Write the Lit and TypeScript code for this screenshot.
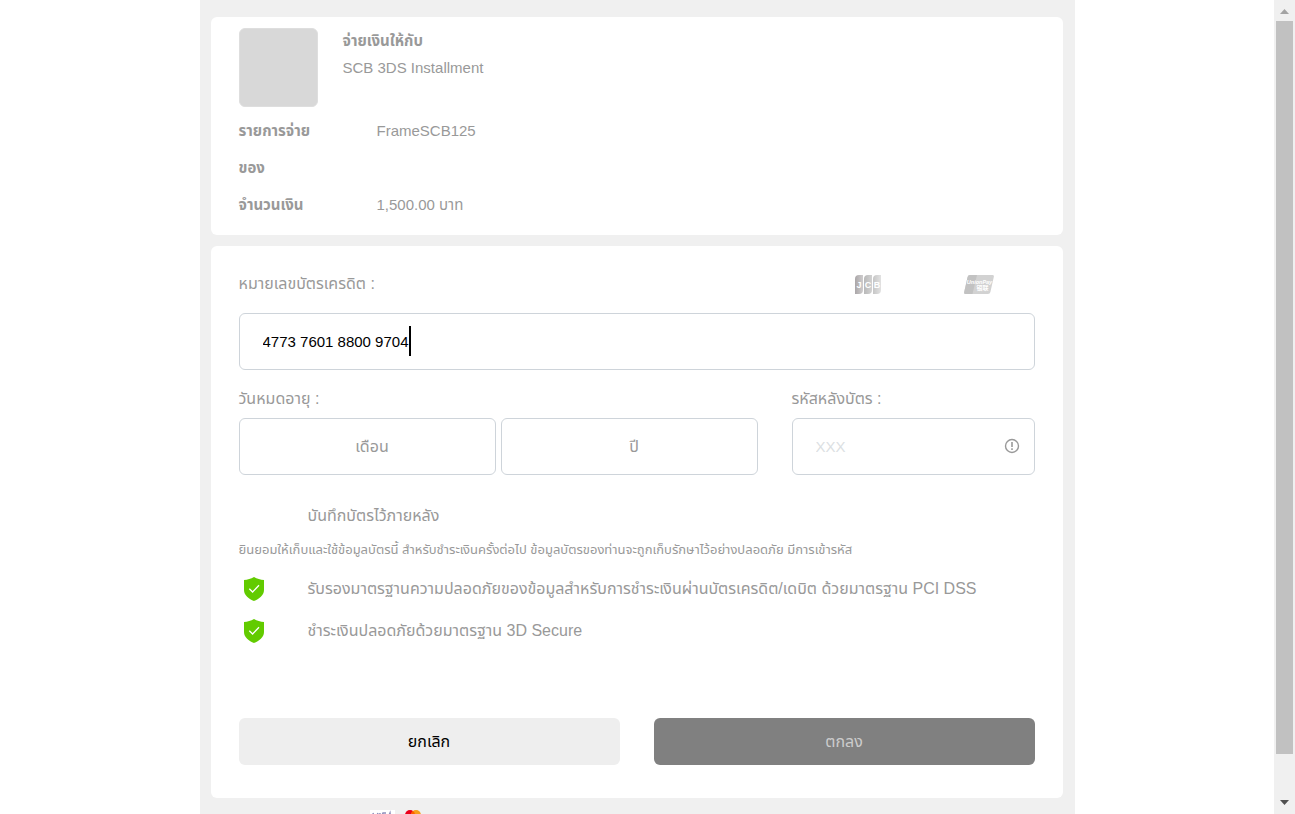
import { LitElement, html, css, svg } from "lit";
import { customElement, property } from "lit/decorators.js";

const shield = svg`<svg class="shield" viewBox="0 0 20 24" aria-hidden="true">
  <path d="M10 0 C13 1.8 16.5 2.8 20 3 V13 C20 18.5 15 22 10 24 C5 22 0 18.5 0 13 V3 C3.5 2.8 7 1.8 10 0Z" fill="#62cb00"/>
  <path d="M5.3 11.7 L8.6 15 L15 8.2" fill="none" stroke="#fff" stroke-width="1.3"/>
</svg>`;

const jcb = svg`<svg class="jcb" viewBox="0 0 26 19" role="img" aria-label="JCB">
  <defs>
    <linearGradient id="j1"><stop offset="0" stop-color="#aaa6a8"/><stop offset="1" stop-color="#cfcdce"/></linearGradient>
    <linearGradient id="j2"><stop offset="0" stop-color="#b9b9b9"/><stop offset="1" stop-color="#d2d2d2"/></linearGradient>
    <linearGradient id="j3"><stop offset="0" stop-color="#c6c6c6"/><stop offset="1" stop-color="#e2e2e2"/></linearGradient>
  </defs>
  <path d="M4 0H8V15a4 4 0 0 1-4 4H0V4a4 4 0 0 1 4-4Z" fill="url(#j1)"/>
  <path d="M13 0H17V15a4 4 0 0 1-4 4H9V4a4 4 0 0 1 4-4Z" fill="url(#j2)"/>
  <path d="M22 0H26V15a4 4 0 0 1-4 4H18V4a4 4 0 0 1 4-4Z" fill="url(#j3)"/>
  <g text-anchor="middle" font-size="9" font-weight="700" font-family="Liberation Sans" fill="#fff">
    <text x="4" y="12.700">J</text><text x="13" y="12.700">C</text><text x="22" y="12.700">B</text>
  </g>
</svg>`;

const unionpay = svg`<svg class="union" viewBox="0 0 30 19" role="img" aria-label="UnionPay">
  <path d="M6 0H28.500Q30.300 0 29.800 2L26.400 17Q26 19 24 19H1.500Q-.3 19 .2 17L3.600 2Q4 0 6 0Z" fill="#d2d2d2"/>
  <path d="M6 0H13L8.500 19H1.500Q-.3 19 .2 17L3.600 2Q4 0 6 0Z" fill="#c2c2c2"/>
  <text x="15.500" y="9" text-anchor="middle" font-size="5.500" font-style="italic" font-weight="700" font-family="Liberation Sans" fill="#fff">UnionPay</text>
  <text x="18.500" y="15" text-anchor="middle" font-size="6" font-weight="700" font-family="Noto Sans CJK SC" fill="#fff">银联</text>
</svg>`;

@customElement("page-scrollbar")
export class PageScrollbar extends LitElement {
  static styles = css`
    :host { display: flex; flex-direction: column; width: 21px; background: #f0f0f0; }
    .arrow { height: 21px; flex: none; display: block; }
    .track { flex: 1; min-height: 0; padding: 0 2px; }
    .thumb { height: 95%; background: #c1c1c1; }
  `;
  render() {
    return html`
      <svg class="arrow" viewBox="0 0 21 21"><path d="M6 14L10.500 9L15 14Z" fill="#a3a3a3"/></svg>
      <div class="track"><div class="thumb"></div></div>
      <svg class="arrow" viewBox="0 0 21 21"><path d="M6 7L10.500 12L15 7Z" fill="#505050"/></svg>
    `;
  }
}

@customElement("app-root")
export class AppRoot extends LitElement {
  @property() cardNumber = "4773 7601 8800 9704";

  static styles = css`
    :host {
      display: flex;
      height: 100vh;
      overflow: hidden;
      background: #fff;
      color: #999;
      font: 16px/26px "Liberation Sans", "Noto Sans Thai", "Noto Sans", sans-serif;
    }
    * { box-sizing: border-box; }
    .view { flex: 1; min-width: 0; overflow: hidden; }
    .page {
      max-width: 875px;
      min-height: 100%;
      margin: 0 auto;
      padding: 17px 12px 0 11px;
      background: #f0f0f0;
    }
    .card { background: #fff; border-radius: 6px; padding: 11px 28px 12px; margin-bottom: 11px; }
    .merchant { display: flex; gap: 25px; margin-bottom: 5px; }
    .logo { width: 79px; height: 79px; border-radius: 6px; background: #d8d8d8; border: 1px solid #dedede; }
    .merchant h1 { margin: 0; font-size: 15px; line-height: 26px; }
    .merchant p { margin: 0; font-size: 15px; line-height: 28px; }
    .details { display: grid; grid-template-columns: 138px 1fr; line-height: 37px; margin: 0; }
    .details dt { font-size: 15px; font-weight: 700; }
    .details dd { margin: 0; font-size: 15px; }
    .form { padding: 24px 28px 33px; }
    .card-head { display: flex; justify-content: space-between; align-items: center; height: 28px; margin-bottom: 15px; }
    .brands { display: flex; gap: 83px; padding-right: 41px; }
    .jcb { width: 26px; height: 19px; }
    .union { width: 30px; height: 19px; }
    .field { position: relative; }
    .box {
      display: block;
      width: 100%;
      height: 57px;
      padding: 0 23px;
      border: 1px solid #ced4da;
      border-radius: 6px;
      background: #fff;
      color: #999;
      font: inherit;
      outline: none;
      appearance: none;
    }
    input.box { font-size: 15px; }
    .box::placeholder { color: #dcdfe3; opacity: 1; }
    .number { color: #000; }
    .month, .year { padding: 0 18px 0 28px; text-align: center; text-align-last: center; }
    .caret { position: absolute; left: 170px; top: 13px; width: 2px; height: 30px; background: #000; }
    .row { display: grid; grid-template-columns: 519fr 243fr; column-gap: 34px; margin-top: 16px; }
    .label { display: block; line-height: 26px; margin-bottom: 6px; }
    .expiry { display: grid; grid-template-columns: 1fr 1fr; gap: 5px; }
    .hint {
      position: absolute; right: 15px; top: 20px; width: 16px; height: 16px;
      padding: 0; border: 0; background: none;
    }
    .hint svg { display: block; }
    .save { display: flex; align-items: center; margin-top: 28px; }
    .save input { width: 20px; height: 20px; margin: 0 49px 0 0; opacity: 0; }
    .consent { margin: 8px 0 13px; font-size: 13px; line-height: 26px; white-space: nowrap; }
    .assure { list-style: none; margin: 0; padding: 0; display: grid; gap: 16px; }
    .assure li { display: grid; grid-template-columns: 20px 1fr; column-gap: 44px; padding-left: 5px; align-items: center; white-space: nowrap; }
    .shield { width: 20px; height: 24px; display: block; }
    .actions { display: grid; grid-template-columns: 1fr 1fr; gap: 34px; margin-top: 74px; }
    .btn { height: 47px; border: 0; border-radius: 6px; font: inherit; }
    .cancel { background: #eee; color: #000; }
    .confirm { background: #808080; color: #ccc; }
    .footer { display: flex; gap: 10px; padding: 1px 0 0 159px; }
    .footer svg { display: block; }
  `;

  render() {
    return html`
      <div class="view"><main class="page">
        <section class="card">
          <div class="merchant">
            <div class="logo"></div>
            <div><h1>จ่ายเงินให้กับ</h1><p>SCB 3DS Installment</p></div>
          </div>
          <dl class="details">
            <dt>รายการจ่าย<br>ของ</dt><dd>FrameSCB125</dd>
            <dt>จำนวนเงิน</dt><dd>1,500.00 บาท</dd>
          </dl>
        </section>

        <form class="card form">
          <div class="card-head">
            <label for="number">หมายเลขบัตรเครดิต :</label>
            <div class="brands">${jcb}${unionpay}</div>
          </div>
          <div class="field">
            <input class="box number" id="number" inputmode="numeric" .value=${this.cardNumber}>
            <span class="caret"></span>
          </div>
          <div class="row">
            <div>
              <label class="label" for="month">วันหมดอายุ :</label>
              <div class="expiry">
                <select class="box month" id="month" aria-label="เดือน"><option>เดือน</option></select>
                <select class="box year" id="year" aria-label="ปี"><option>ปี</option></select>
              </div>
            </div>
            <div>
              <label class="label" for="cvc">รหัสหลังบัตร :</label>
              <div class="field">
                <input class="box" id="cvc" placeholder="XXX">
                <button class="hint" type="button" aria-label="รหัสหลังบัตร">
                  <svg width="16" height="16" viewBox="0 0 16 16"><circle cx="8" cy="8" r="6.500" fill="none" stroke="#999" stroke-width="1.400"/><path d="M8 4V9M8 10.300V12" stroke="#999" stroke-width="1.600"/></svg>
                </button>
              </div>
            </div>
          </div>
          <label class="save"><input type="checkbox">บันทึกบัตรไว้ภายหลัง</label>
          <p class="consent">ยินยอมให้เก็บและใช้ข้อมูลบัตรนี้ สำหรับชำระเงินครั้งต่อไป ข้อมูลบัตรของท่านจะถูกเก็บรักษาไว้อย่างปลอดภัย มีการเข้ารหัส</p>
          <ul class="assure">
            <li>${shield}<span>รับรองมาตรฐานความปลอดภัยของข้อมูลสำหรับการชำระเงินผ่านบัตรเครดิต/เดบิต ด้วยมาตรฐาน PCI DSS</span></li>
            <li>${shield}<span>ชำระเงินปลอดภัยด้วยมาตรฐาน 3D Secure</span></li>
          </ul>
          <div class="actions">
            <button class="btn cancel" type="button">ยกเลิก</button>
            <button class="btn confirm" type="submit" disabled>ตกลง</button>
          </div>
        </form>

        <footer class="footer">
          <svg width="25" height="16" viewBox="0 0 25 16" role="img" aria-label="Visa"><path d="M0 0H25V16H0Z" fill="#fff"/><path d="M3 3L5 10L8 3M10 3L9 10M16 3H13L12 6L14 8L12 10M17 10L20 3L21 10" fill="none" stroke="#8f8fbb" stroke-width="1.500"/></svg>
          <svg width="16" height="10" viewBox="0 0 16 10" role="img" aria-label="Mastercard"><circle cx="5" cy="5" r="5" fill="#eb001b"/><circle cx="11" cy="5" r="5" fill="#f79e1b"/><path d="M8 1A5 5 0 0 1 8 9A5 5 0 0 1 8 1Z" fill="#ff5f00"/></svg>
        </footer>
      </main></div>
      <page-scrollbar aria-hidden="true"></page-scrollbar>
    `;
  }
}
